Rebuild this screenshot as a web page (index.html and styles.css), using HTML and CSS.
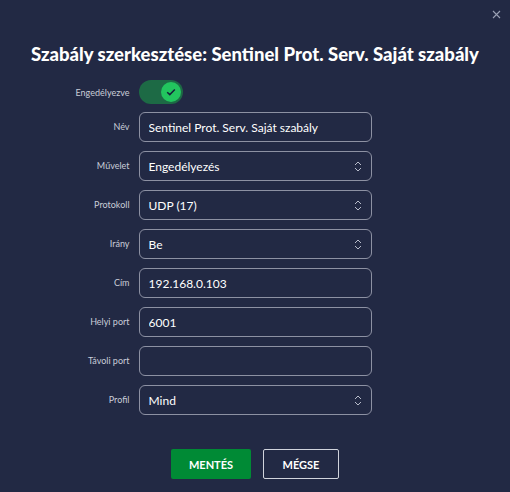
FILE: index.html
```html
<!DOCTYPE html>
<html lang="hu">

<head>
    <meta charset="UTF-8" />
    <meta name="viewport" content="width=device-width, initial-scale=1.0" />
    <title>Szabály szerkesztése</title>
    <link rel="stylesheet" href="styles.css">
</head>

<body>
    <div class="dialog">
        <button class="close-button" type="button" aria-label="Bezárás">
            <svg width="9" height="9" viewBox="0 0 9 9">
                <path d="M1 1L8 8M8 1L1 8" stroke="#9aa0b4" stroke-width="1.1" fill="none" />
            </svg>
        </button>
        <h2>Szabály szerkesztése: Sentinel Prot. Serv. Saját szabály</h2>

        <form id="ruleForm">
            <div class="row row-toggle">
                <span class="label">Engedélyezve</span>
                <div class="toggle">
                    <span class="knob">
                        <svg width="10" height="8" viewBox="0 0 10 8">
                            <path d="M1.2 4.2L3.8 6.6L8.8 1.4" stroke="#15203a" stroke-width="1.5" fill="none" />
                        </svg>
                    </span>
                </div>
            </div>

            <div class="row">
                <label class="label" for="ruleName">Név</label>
                <input type="text" id="ruleName" value="Sentinel Prot. Serv. Saját szabály" />
            </div>

            <div class="row">
                <label class="label" for="action">Művelet</label>
                <div class="select">
                    <span>Engedélyezés</span>
                    <svg class="arrows" width="8" height="11" viewBox="0 0 8 11">
                        <path d="M1 4L4 1L7 4M1 7L4 10L7 7" stroke="#b8bccb" stroke-width="1" fill="none" />
                    </svg>
                </div>
            </div>

            <div class="row">
                <label class="label" for="protocol">Protokoll</label>
                <div class="select">
                    <span>UDP (17)</span>
                    <svg class="arrows" width="8" height="11" viewBox="0 0 8 11">
                        <path d="M1 4L4 1L7 4M1 7L4 10L7 7" stroke="#b8bccb" stroke-width="1" fill="none" />
                    </svg>
                </div>
            </div>

            <div class="row">
                <label class="label" for="direction">Irány</label>
                <div class="select">
                    <span>Be</span>
                    <svg class="arrows" width="8" height="11" viewBox="0 0 8 11">
                        <path d="M1 4L4 1L7 4M1 7L4 10L7 7" stroke="#b8bccb" stroke-width="1" fill="none" />
                    </svg>
                </div>
            </div>

            <div class="row">
                <label class="label" for="address">Cím</label>
                <input type="text" id="address" value="192.168.0.103" />
            </div>

            <div class="row">
                <label class="label" for="localPort">Helyi port</label>
                <input type="text" id="localPort" value="6001" />
            </div>

            <div class="row">
                <label class="label" for="remotePort">Távoli port</label>
                <input type="text" id="remotePort" value="" />
            </div>

            <div class="row">
                <label class="label" for="profile">Profil</label>
                <div class="select">
                    <span>Mind</span>
                    <svg class="arrows" width="8" height="11" viewBox="0 0 8 11">
                        <path d="M1 4L4 1L7 4M1 7L4 10L7 7" stroke="#b8bccb" stroke-width="1" fill="none" />
                    </svg>
                </div>
            </div>

            <div class="actions">
                <button type="submit" class="btn btn-save">MENTÉS</button>
                <button type="button" class="btn btn-cancel">MÉGSE</button>
            </div>
        </form>
    </div>
</body>

</html>
```

FILE: styles.css
```css
* {
    box-sizing: border-box;
}

body {
    font-family: Lato, 'Liberation Sans', sans-serif;
    background-color: #222944;
    color: #fff;
    margin: 0;
}

.dialog {
    width: 510px;
    height: 492px;
    padding-top: 42px;
}

.close-button {
    position: absolute;
    top: 7px;
    right: 9px;
    background: none;
    border: none;
    padding: 0;
    cursor: pointer;
}

h2 {
    text-align: center;
    font-size: 18.5px;
    font-weight: 900;
    margin: 0 0 14px;
    line-height: 24px;
}

.row {
    display: grid;
    grid-template-columns: 1fr 233px 1fr;
    column-gap: 9px;
    align-items: start;
    margin-bottom: 9px;
}

.label {
    grid-column: 1;
    text-align: right;
    font-size: 9px;
    color: #c9cdd8;
    padding-top: 9px;
}

.row-toggle {
    align-items: center;
    margin-bottom: 8px;
}

.row-toggle .label {
    padding-top: 0;
}

.toggle {
    width: 44px;
    height: 24px;
    border-radius: 12px;
    background: #1d6a45;
    display: flex;
    justify-content: flex-end;
    align-items: center;
    padding-right: 2px;
}

.knob {
    width: 20px;
    height: 20px;
    border-radius: 50%;
    background: #22c55e;
    display: flex;
    align-items: center;
    justify-content: center;
}

input,
.select {
    grid-column: 2;
    width: 233px;
    height: 30px;
    border: 1px solid #8d91a3;
    border-radius: 6px;
    background: transparent;
    color: #fff;
    font-family: inherit;
    font-size: 12px;
    padding: 0 9px;
    outline: none;
}

.select {
    display: flex;
    align-items: center;
    justify-content: space-between;
}

.actions {
    display: flex;
    justify-content: center;
    gap: 12px;
    margin-top: 34px;
}

.btn {
    height: 30px;
    font-family: inherit;
    font-size: 11px;
    font-weight: 700;
    color: #fff;
    border-radius: 2px;
    cursor: pointer;
}

.btn-save {
    width: 80px;
    background-color: #008a35;
    border: none;
}

.btn-cancel {
    width: 76px;
    background: transparent;
    border: 1px solid #d0d3dc;
}
```
